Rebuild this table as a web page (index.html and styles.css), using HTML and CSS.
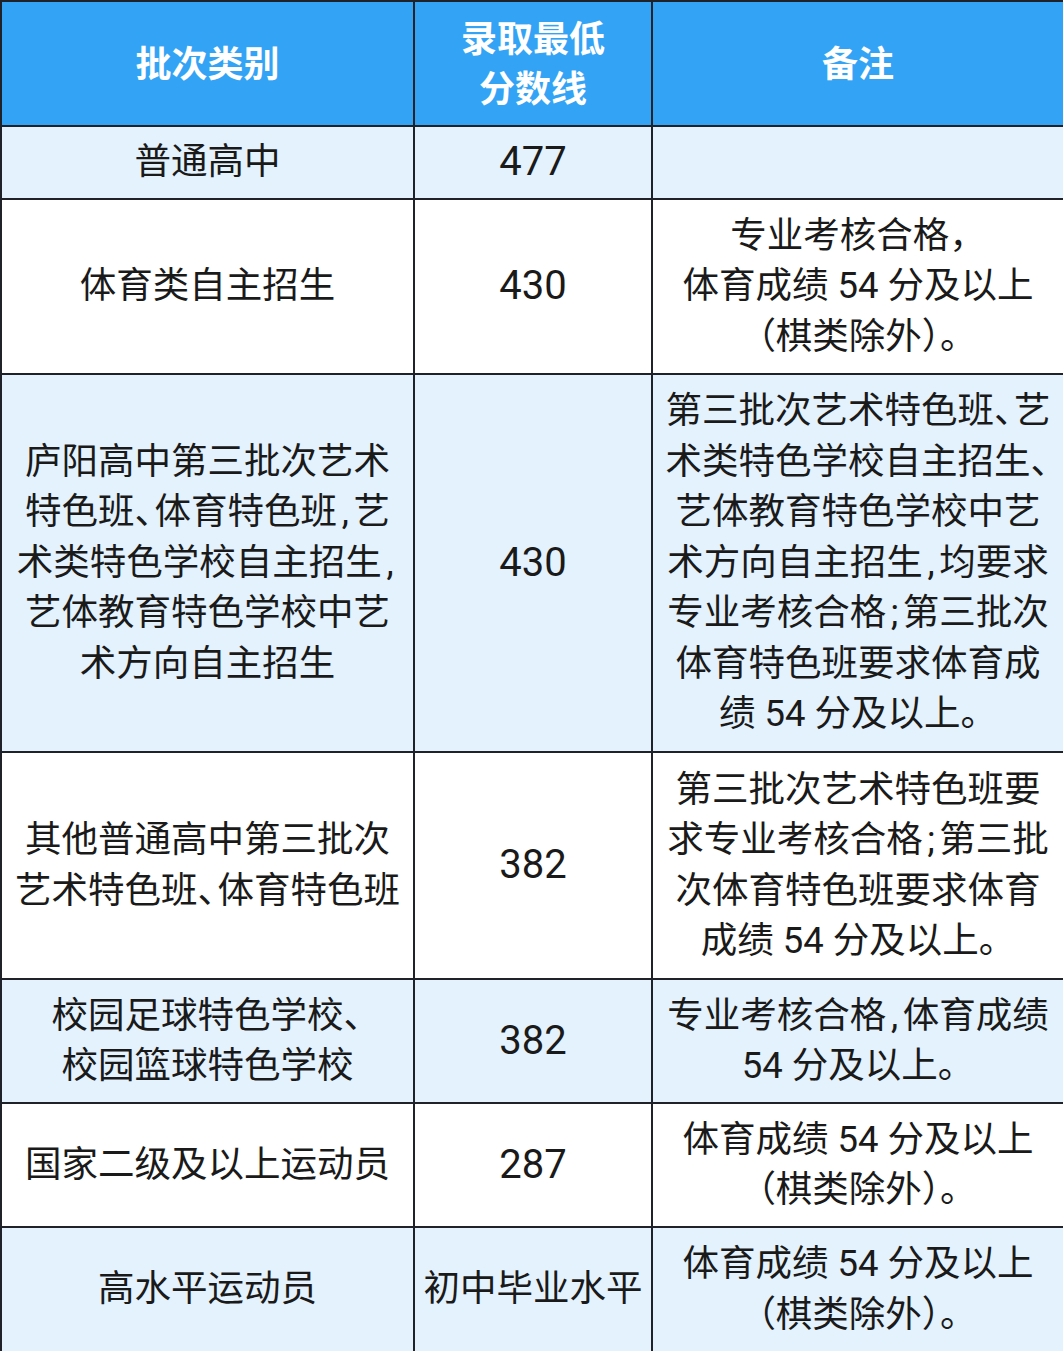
FILE: index.html
```html
<!DOCTYPE html>
<html lang="zh-CN">
<head>
<meta charset="utf-8">
<link rel="stylesheet" href="styles.css">
</head>
<body>
<table class="score-table">
  <colgroup>
    <col class="c1">
    <col class="c2">
    <col class="c3">
  </colgroup>
  <thead>
    <tr class="head">
      <th>批次类别</th>
      <th>录取最低<br>分数线</th>
      <th>备注</th>
    </tr>
  </thead>
  <tbody>
    <tr class="r1 alt">
      <td>普通高中</td>
      <td class="num">477</td>
      <td></td>
    </tr>
    <tr class="r2">
      <td>体育类自主招生</td>
      <td class="num">430</td>
      <td>专业考核合格，<br>体育成绩 54 分及以上<br>（棋类除外）。</td>
    </tr>
    <tr class="r3 alt">
      <td>庐阳高中第三批次艺术<br>特色班<span class="dun">、</span>体育特色班<span class="hw">,</span>艺<br>术类特色学校自主招生<span class="hw">,</span><br>艺体教育特色学校中艺<br>术方向自主招生</td>
      <td class="num">430</td>
      <td>第三批次艺术特色班<span class="dun">、</span>艺<br>术类特色学校自主招生<span class="dun">、</span><br>艺体教育特色学校中艺<br>术方向自主招生<span class="hw">,</span>均要求<br>专业考核合格<span class="hw">;</span>第三批次<br>体育特色班要求体育成<br>绩 54 分及以上。</td>
    </tr>
    <tr class="r4">
      <td>其他普通高中第三批次<br>艺术特色班<span class="dun">、</span>体育特色班</td>
      <td class="num">382</td>
      <td>第三批次艺术特色班要<br>求专业考核合格<span class="hw">;</span>第三批<br>次体育特色班要求体育<br>成绩 54 分及以上。</td>
    </tr>
    <tr class="r5 alt">
      <td>校园足球特色学校<span class="dun">、</span><br>校园篮球特色学校</td>
      <td class="num">382</td>
      <td>专业考核合格<span class="hw">,</span>体育成绩<br>54 分及以上。</td>
    </tr>
    <tr class="r6">
      <td>国家二级及以上运动员</td>
      <td class="num">287</td>
      <td>体育成绩 54 分及以上<br>（棋类除外）。</td>
    </tr>
    <tr class="r7 alt">
      <td>高水平运动员</td>
      <td>初中毕业水平</td>
      <td>体育成绩 54 分及以上<br>（棋类除外）。</td>
    </tr>
  </tbody>
</table>
</body>
</html>
```
FILE: styles.css
```css
html, body {
  margin: 0;
  padding: 0;
  background: #ffffff;
}

.score-table {
  width: 1063px;
  border-collapse: collapse;
  table-layout: fixed;
  font-family: "Roboto", "Noto Sans CJK SC", sans-serif;
  color: #1a1a1a;
}

.c1 { width: 413px; }
.c2 { width: 238px; }
.c3 { width: 412px; }

.score-table th,
.score-table td {
  border: 2px solid #1f2329;
  padding: 0;
  text-align: center;
  vertical-align: middle;
  white-space: nowrap;
}

.score-table th {
  background: #33a3f5;
  color: #ffffff;
  font-size: 36px;
  font-weight: 700;
  line-height: 50px;
  padding-bottom: 6px;
  font-family: "Noto Sans CJK SC", sans-serif;
}

.score-table td {
  font-size: 36.5px;
  line-height: 50.5px;
  font-weight: 400;
}

.score-table td.num {
  font-size: 40px;
}

.hw {
  display: inline-block;
  width: 0.45em;
  text-align: center;
}

.dun {
  letter-spacing: -0.5em;
  margin-right: 0.05em;
}

.alt td { background: #e4f2fd; }

.head { height: 125px; }
.r1 { height: 73px; }
.r2 { height: 175px; }
.r3 { height: 378px; }
.r4 { height: 227px; }
.r5 { height: 124px; }
.r6 { height: 124px; }
.r7 { height: 125px; }
```
